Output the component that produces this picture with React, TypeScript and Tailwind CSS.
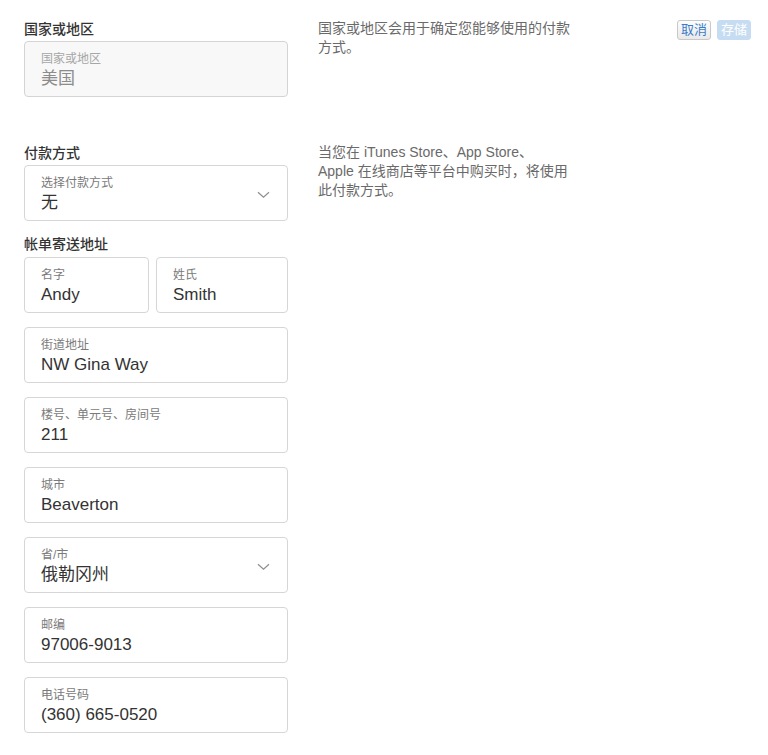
import React from "react";

const font = {
  fontFamily: '"Liberation Sans", "Noto Sans CJK SC", sans-serif',
};

function Chevron() {
  return (
    <svg width="13" height="8" viewBox="0 0 13 8" className="absolute right-[17px] top-[25px]">
      <path d="M1 1.2 L6.5 6.2 L12 1.2" fill="none" stroke="#8e8e8e" strokeWidth="1.2" />
    </svg>
  );
}

function Field({
  label,
  value,
  disabled,
  select,
  className = "",
}: {
  label: string;
  value: string;
  disabled?: boolean;
  select?: boolean;
  className?: string;
}) {
  return (
    <div
      className={
        "relative h-[56px] rounded-[4px] border px-4 pt-[10px] " +
        (disabled ? "border-[#d4d4d4] bg-[#f8f8f8] " : "border-[#d6d6d6] bg-white ") +
        className
      }
    >
      <div className={"text-[12px] leading-[14px] " + (disabled ? "text-[#a6a6a6]" : "text-[#7a7a7a]")}>
        {label}
      </div>
      <div className={"mt-[2px] text-[17px] leading-[22px] " + (disabled ? "text-[#8c8c8c]" : "text-[#333333]")}>
        {value}
      </div>
      {select && <Chevron />}
    </div>
  );
}

export default function App() {
  return (
    <div style={font} className="relative min-h-[755px] w-[768px] bg-white pl-6 pt-[19px]">
      <div className="absolute right-[17px] top-[20px] flex gap-[6px]">
        <button className="h-[20px] w-[34px] rounded-[3px] border border-[#c8c8c8] bg-gradient-to-b from-[#fdfdfd] to-[#e9e9e9] text-[13px] leading-[18px] text-[#3b7cc9]">
          取消
        </button>
        <button className="h-[20px] w-[34px] rounded-[3px] border border-[#c6dcf2] bg-[#c6dcf2] text-[13px] leading-[18px] text-white">
          存储
        </button>
      </div>

      <div className="flex gap-[30px]">
        <div className="w-[264px]">
          <div className="mb-[2px] text-[14px] font-medium leading-[20px] text-[#333333]">国家或地区</div>
          <Field label="国家或地区" value="美国" disabled />
        </div>
        <div className="text-[14px] leading-[19px] text-[#6a6a6a] whitespace-nowrap">
          国家或地区会用于确定您能够使用的付款
          <br />
          方式。
        </div>
      </div>

      <div className="mt-[46px] flex gap-[30px]">
        <div className="w-[264px]">
          <div className="mb-[2px] text-[14px] font-medium leading-[20px] text-[#333333]">付款方式</div>
          <Field label="选择付款方式" value="无" select />

          <div className="mb-[3px] mt-[13px] text-[14px] font-medium leading-[20px] text-[#333333]">帐单寄送地址</div>
          <div className="flex flex-col gap-[14px]">
            <div className="flex gap-[7px]">
              <Field label="名字" value="Andy" className="w-[125px]" />
              <Field label="姓氏" value="Smith" className="w-[132px]" />
            </div>
            <Field label="街道地址" value="NW Gina Way" />
            <Field label="楼号、单元号、房间号" value="211" />
            <Field label="城市" value="Beaverton" />
            <Field label="省/市" value="俄勒冈州" select />
            <Field label="邮编" value="97006-9013" />
            <Field label="电话号码" value="(360) 665-0520" />
          </div>
        </div>
        <div className="text-[14px] leading-[19px] text-[#6a6a6a] whitespace-nowrap">
          当您在 iTunes Store、App Store、
          <br />
          Apple 在线商店等平台中购买时，将使用
          <br />
          此付款方式。
        </div>
      </div>
    </div>
  );
}
